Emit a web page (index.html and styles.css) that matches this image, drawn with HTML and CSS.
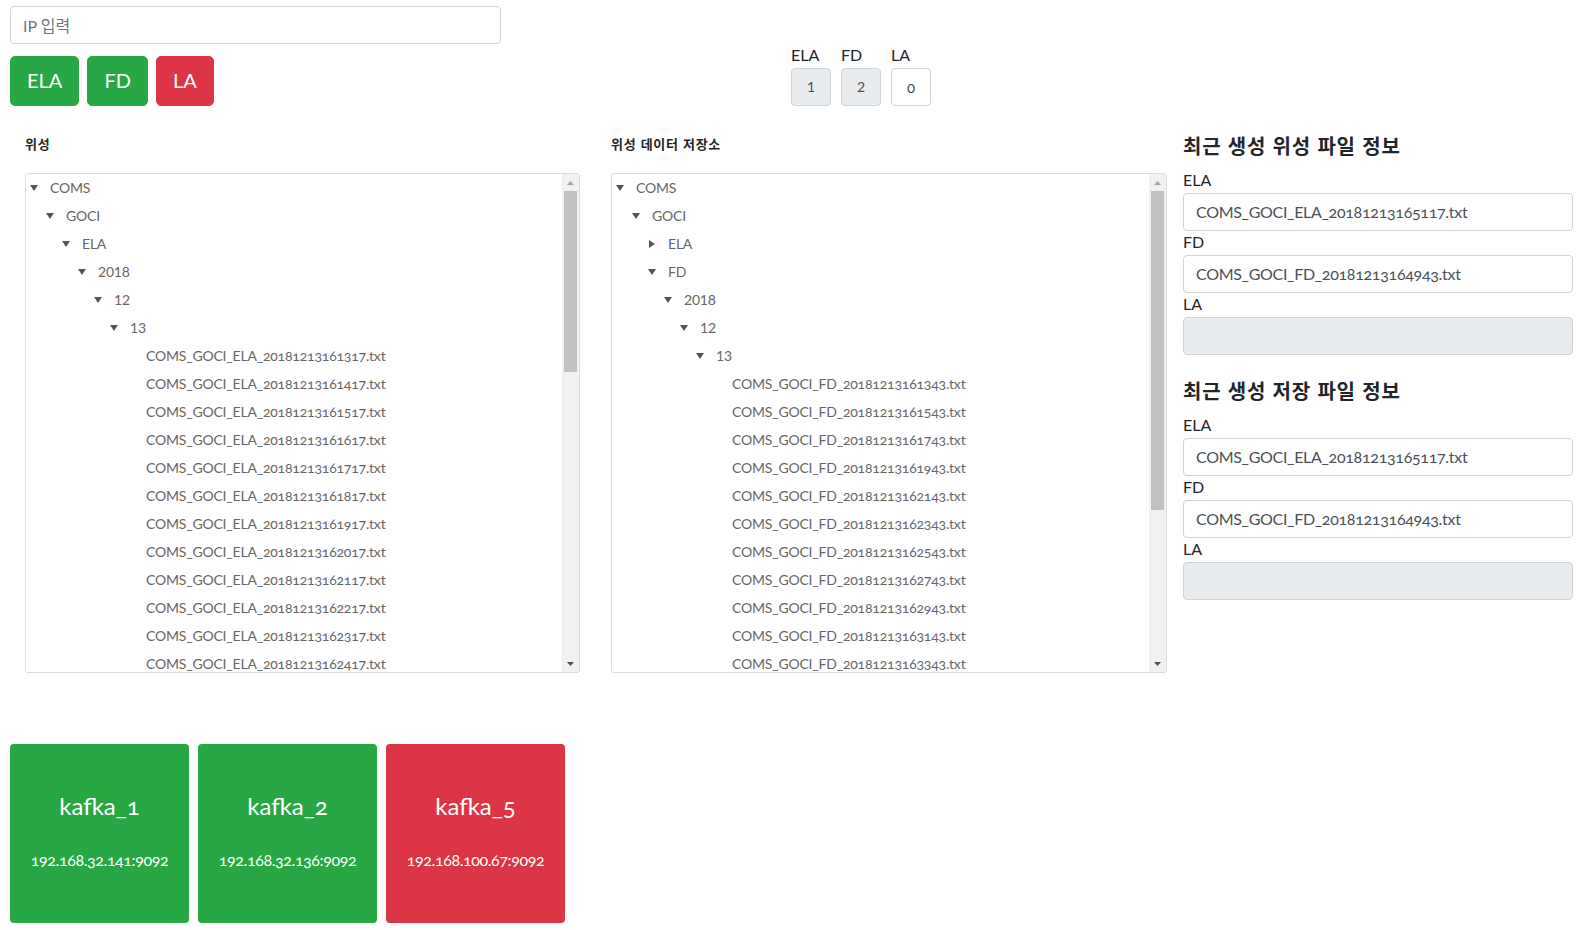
FILE: index.html
```html
<!DOCTYPE html>
<html lang="ko">
<head>
<meta charset="utf-8">
<title>Satellite Monitor</title>
<link rel="stylesheet" href="styles.css">
</head>
<body>
<div class="page">
  <div class="top">
    <div class="controls">
      <input class="form-control ip-input" type="text" placeholder="IP 입력">
      <div class="btns">
        <button class="btn btn-green">ELA</button>
        <button class="btn btn-green">FD</button>
        <button class="btn btn-red">LA</button>
      </div>
    </div>
    <div class="counters">
      <div class="counter"><div class="c-label">ELA</div><div class="c-box filled">1</div></div>
      <div class="counter"><div class="c-label">FD</div><div class="c-box filled">2</div></div>
      <div class="counter"><div class="c-label">LA</div><div class="c-box">0</div></div>
    </div>
  </div>

  <div class="main">
    <div class="tree-col">
      <div class="sec-label">위성</div>
      <div class="tree">
        <div class="tree-body">
          <div class="row lv0"><span class="tg"><svg width="8" height="6" viewBox="0 0 8 6"><polygon points="0,0 8,0 4,6" /></svg></span>COMS</div>
          <div class="row lv1"><span class="tg"><svg width="8" height="6" viewBox="0 0 8 6"><polygon points="0,0 8,0 4,6" /></svg></span>GOCI</div>
          <div class="row lv2"><span class="tg"><svg width="8" height="6" viewBox="0 0 8 6"><polygon points="0,0 8,0 4,6" /></svg></span>ELA</div>
          <div class="row lv3 folder-num"><span class="tg"><svg width="8" height="6" viewBox="0 0 8 6"><polygon points="0,0 8,0 4,6" /></svg></span>2018</div>
          <div class="row lv4 folder-num"><span class="tg"><svg width="8" height="6" viewBox="0 0 8 6"><polygon points="0,0 8,0 4,6" /></svg></span>12</div>
          <div class="row lv5 folder-num"><span class="tg"><svg width="8" height="6" viewBox="0 0 8 6"><polygon points="0,0 8,0 4,6" /></svg></span>13</div>
          <div class="row lv6"><span class="tg"></span>COMS_GOCI_ELA_20181213161317.txt</div>
          <div class="row lv6"><span class="tg"></span>COMS_GOCI_ELA_20181213161417.txt</div>
          <div class="row lv6"><span class="tg"></span>COMS_GOCI_ELA_20181213161517.txt</div>
          <div class="row lv6"><span class="tg"></span>COMS_GOCI_ELA_20181213161617.txt</div>
          <div class="row lv6"><span class="tg"></span>COMS_GOCI_ELA_20181213161717.txt</div>
          <div class="row lv6"><span class="tg"></span>COMS_GOCI_ELA_20181213161817.txt</div>
          <div class="row lv6"><span class="tg"></span>COMS_GOCI_ELA_20181213161917.txt</div>
          <div class="row lv6"><span class="tg"></span>COMS_GOCI_ELA_20181213162017.txt</div>
          <div class="row lv6"><span class="tg"></span>COMS_GOCI_ELA_20181213162117.txt</div>
          <div class="row lv6"><span class="tg"></span>COMS_GOCI_ELA_20181213162217.txt</div>
          <div class="row lv6"><span class="tg"></span>COMS_GOCI_ELA_20181213162317.txt</div>
          <div class="row lv6"><span class="tg"></span>COMS_GOCI_ELA_20181213162417.txt</div>
        </div>
        <div class="scrollbar">
          <div class="sb-btn"><svg width="7" height="4" viewBox="0 0 7 4"><polygon class="sb-up" points="0,4 7,4 3.5,0" /></svg></div>
          <div class="sb-track"><div class="sb-thumb" style="height:181px"></div></div>
          <div class="sb-btn"><svg width="7" height="4" viewBox="0 0 7 4"><polygon class="sb-down" points="0,0 7,0 3.5,4" /></svg></div>
        </div>
      </div>
    </div>

    <div class="tree-col wide">
      <div class="sec-label">위성 데이터 저장소</div>
      <div class="tree">
        <div class="tree-body">
          <div class="row lv0"><span class="tg"><svg width="8" height="6" viewBox="0 0 8 6"><polygon points="0,0 8,0 4,6" /></svg></span>COMS</div>
          <div class="row lv1"><span class="tg"><svg width="8" height="6" viewBox="0 0 8 6"><polygon points="0,0 8,0 4,6" /></svg></span>GOCI</div>
          <div class="row lv2"><span class="tg"><svg width="8" height="8" viewBox="0 0 8 8"><polygon points="1,0 7,4 1,8" /></svg></span>ELA</div>
          <div class="row lv2"><span class="tg"><svg width="8" height="6" viewBox="0 0 8 6"><polygon points="0,0 8,0 4,6" /></svg></span>FD</div>
          <div class="row lv3 folder-num"><span class="tg"><svg width="8" height="6" viewBox="0 0 8 6"><polygon points="0,0 8,0 4,6" /></svg></span>2018</div>
          <div class="row lv4 folder-num"><span class="tg"><svg width="8" height="6" viewBox="0 0 8 6"><polygon points="0,0 8,0 4,6" /></svg></span>12</div>
          <div class="row lv5 folder-num"><span class="tg"><svg width="8" height="6" viewBox="0 0 8 6"><polygon points="0,0 8,0 4,6" /></svg></span>13</div>
          <div class="row lv6"><span class="tg"></span>COMS_GOCI_FD_20181213161343.txt</div>
          <div class="row lv6"><span class="tg"></span>COMS_GOCI_FD_20181213161543.txt</div>
          <div class="row lv6"><span class="tg"></span>COMS_GOCI_FD_20181213161743.txt</div>
          <div class="row lv6"><span class="tg"></span>COMS_GOCI_FD_20181213161943.txt</div>
          <div class="row lv6"><span class="tg"></span>COMS_GOCI_FD_20181213162143.txt</div>
          <div class="row lv6"><span class="tg"></span>COMS_GOCI_FD_20181213162343.txt</div>
          <div class="row lv6"><span class="tg"></span>COMS_GOCI_FD_20181213162543.txt</div>
          <div class="row lv6"><span class="tg"></span>COMS_GOCI_FD_20181213162743.txt</div>
          <div class="row lv6"><span class="tg"></span>COMS_GOCI_FD_20181213162943.txt</div>
          <div class="row lv6"><span class="tg"></span>COMS_GOCI_FD_20181213163143.txt</div>
          <div class="row lv6"><span class="tg"></span>COMS_GOCI_FD_20181213163343.txt</div>
        </div>
        <div class="scrollbar">
          <div class="sb-btn"><svg width="7" height="4" viewBox="0 0 7 4"><polygon class="sb-up" points="0,4 7,4 3.5,0" /></svg></div>
          <div class="sb-track"><div class="sb-thumb" style="height:319px"></div></div>
          <div class="sb-btn"><svg width="7" height="4" viewBox="0 0 7 4"><polygon class="sb-down" points="0,0 7,0 3.5,4" /></svg></div>
        </div>
      </div>
    </div>

    <div class="info-col">
      <div class="info-group">
        <h4 class="info-title">최근 생성 위성 파일 정보</h4>
        <label class="f-label">ELA</label>
        <div class="form-control">COMS_GOCI_ELA_20181213165117.txt</div>
        <label class="f-label">FD</label>
        <div class="form-control">COMS_GOCI_FD_20181213164943.txt</div>
        <label class="f-label">LA</label>
        <div class="form-control disabled"></div>
      </div>
      <div class="info-group second">
        <h4 class="info-title">최근 생성 저장 파일 정보</h4>
        <label class="f-label">ELA</label>
        <div class="form-control">COMS_GOCI_ELA_20181213165117.txt</div>
        <label class="f-label">FD</label>
        <div class="form-control">COMS_GOCI_FD_20181213164943.txt</div>
        <label class="f-label">LA</label>
        <div class="form-control disabled"></div>
      </div>
    </div>
  </div>

  <div class="kafka-row">
    <div class="kcard green"><div class="k-name">kafka_1</div><div class="k-ip">192.168.32.141:9092</div></div>
    <div class="kcard green"><div class="k-name">kafka_2</div><div class="k-ip">192.168.32.136:9092</div></div>
    <div class="kcard red"><div class="k-name">kafka_5</div><div class="k-ip">192.168.100.67:9092</div></div>
  </div>
</div>
</body>
</html>
```

FILE: styles.css
```css
* { box-sizing: border-box; }
html, body { margin: 0; padding: 0; background: #fff; }
body {
  font-family: Lato, "Noto Sans CJK KR", sans-serif;
  font-size: 16px;
  line-height: 1.5;
  color: #212529;
  font-variant-numeric: oldstyle-nums;
}
.page { width: 1587px; }

.top { display: flex; padding: 6px 0 0 10px; }
.controls { width: 491px; }
.form-control {
  display: block;
  width: 100%;
  height: 38px;
  padding: 6px 12px;
  font: inherit;
  font-size: 16px;
  line-height: 24px;
  color: #495057;
  background: #fff;
  border: 1px solid #ced4da;
  border-radius: 4px;
  white-space: nowrap;
  overflow: hidden;
  letter-spacing: -0.3px;
}
.form-control.disabled { background: #e9ecef; }
.ip-input { letter-spacing: 0; }
.ip-input::placeholder { color: #6c757d; }
.btns { display: flex; gap: 8px; margin-top: 12px; }
.btn {
  font-family: inherit;
  font-size: 20px;
  line-height: 30px;
  padding: 8px 16px 10px;
  border: 1px solid transparent;
  border-radius: 5px;
  color: #fff;
}
.btn-green { background: #28a745; border-color: #28a745; }
.btn-red { background: #dc3545; border-color: #dc3545; }

.counters { display: flex; gap: 10px; margin-left: 290px; padding-top: 37px; }
.counter { width: 40px; }
.c-label { line-height: 24px; margin-bottom: 1px; color: #212529; }
.c-box {
  height: 38px;
  border: 1px solid #ced4da;
  border-radius: 4px;
  text-align: center;
  line-height: 36px;
  font-size: 15px;
  color: #495057;
  background: #fff;
}
.c-box.filled { background: #e9ecef; font-variant-numeric: lining-nums; font-size: 14px; }

.main { display: flex; padding-left: 25px; margin-top: 22px; }
.tree-col { width: 555px; }
.tree-col.wide { width: 556px; margin-left: 31px; }
.sec-label {
  font-family: "Noto Sans CJK KR", sans-serif;
  font-weight: 700;
  font-size: 13px;
  line-height: 20px;
  padding-top: 6px;
  margin-bottom: 19px;
  letter-spacing: 0.7px;
  color: #212529;
}
.tree {
  display: flex;
  height: 500px;
  border: 1px solid #dcdcdc;
  border-radius: 3px;
  overflow: hidden;
}
.tree-body { flex: 1; overflow: hidden; }
.row {
  display: flex;
  align-items: center;
  height: 28px;
  font-size: 14px;
  color: #666;
  white-space: nowrap;
  letter-spacing: -0.2px;
  padding-bottom: 1px;
}
.row.folder-num { font-variant-numeric: lining-nums; }
.tg { width: 20px; flex: none; display: flex; align-items: center; }
.tg svg { fill: #555; }
.lv0 { padding-left: 4px; }
.lv1 { padding-left: 20px; }
.lv2 { padding-left: 36px; }
.lv3 { padding-left: 52px; }
.lv4 { padding-left: 68px; }
.lv5 { padding-left: 84px; }
.lv6 { padding-left: 100px; }

.scrollbar { width: 17px; flex: none; background: #f1f1f1; display: flex; flex-direction: column; }
.sb-btn { height: 17px; display: flex; align-items: center; justify-content: center; flex: none; }
.sb-up { fill: #a3a3a3; }
.sb-down { fill: #505050; }
.sb-track { flex: 1; padding: 0 2px; }
.sb-thumb { background: #c1c1c1; }

.info-col { width: 390px; margin-left: 16px; }
.info-title {
  font-family: "Noto Sans CJK KR", sans-serif;
  font-weight: 700;
  font-size: 20px;
  line-height: 24px;
  letter-spacing: 0.8px;
  margin: 6px 0 11px;
  color: #212529;
}
.info-group.second { margin-top: 24px; }
.f-label { display: block; line-height: 24px; color: #212529; margin-top: -1px; margin-bottom: 1px; }

.kafka-row { display: flex; gap: 9px; padding-left: 10px; margin-top: 71px; }
.kcard {
  width: 179px;
  height: 179px;
  border-radius: 4px;
  color: #fff;
  text-align: center;
  padding-top: 47px;
}
.kcard.green { background: #28a745; }
.kcard.red { background: #dc3545; }
.k-name { font-size: 24px; line-height: 29px; }
.k-ip { font-size: 16px; line-height: 24px; margin-top: 28px; letter-spacing: -0.4px; }
```
